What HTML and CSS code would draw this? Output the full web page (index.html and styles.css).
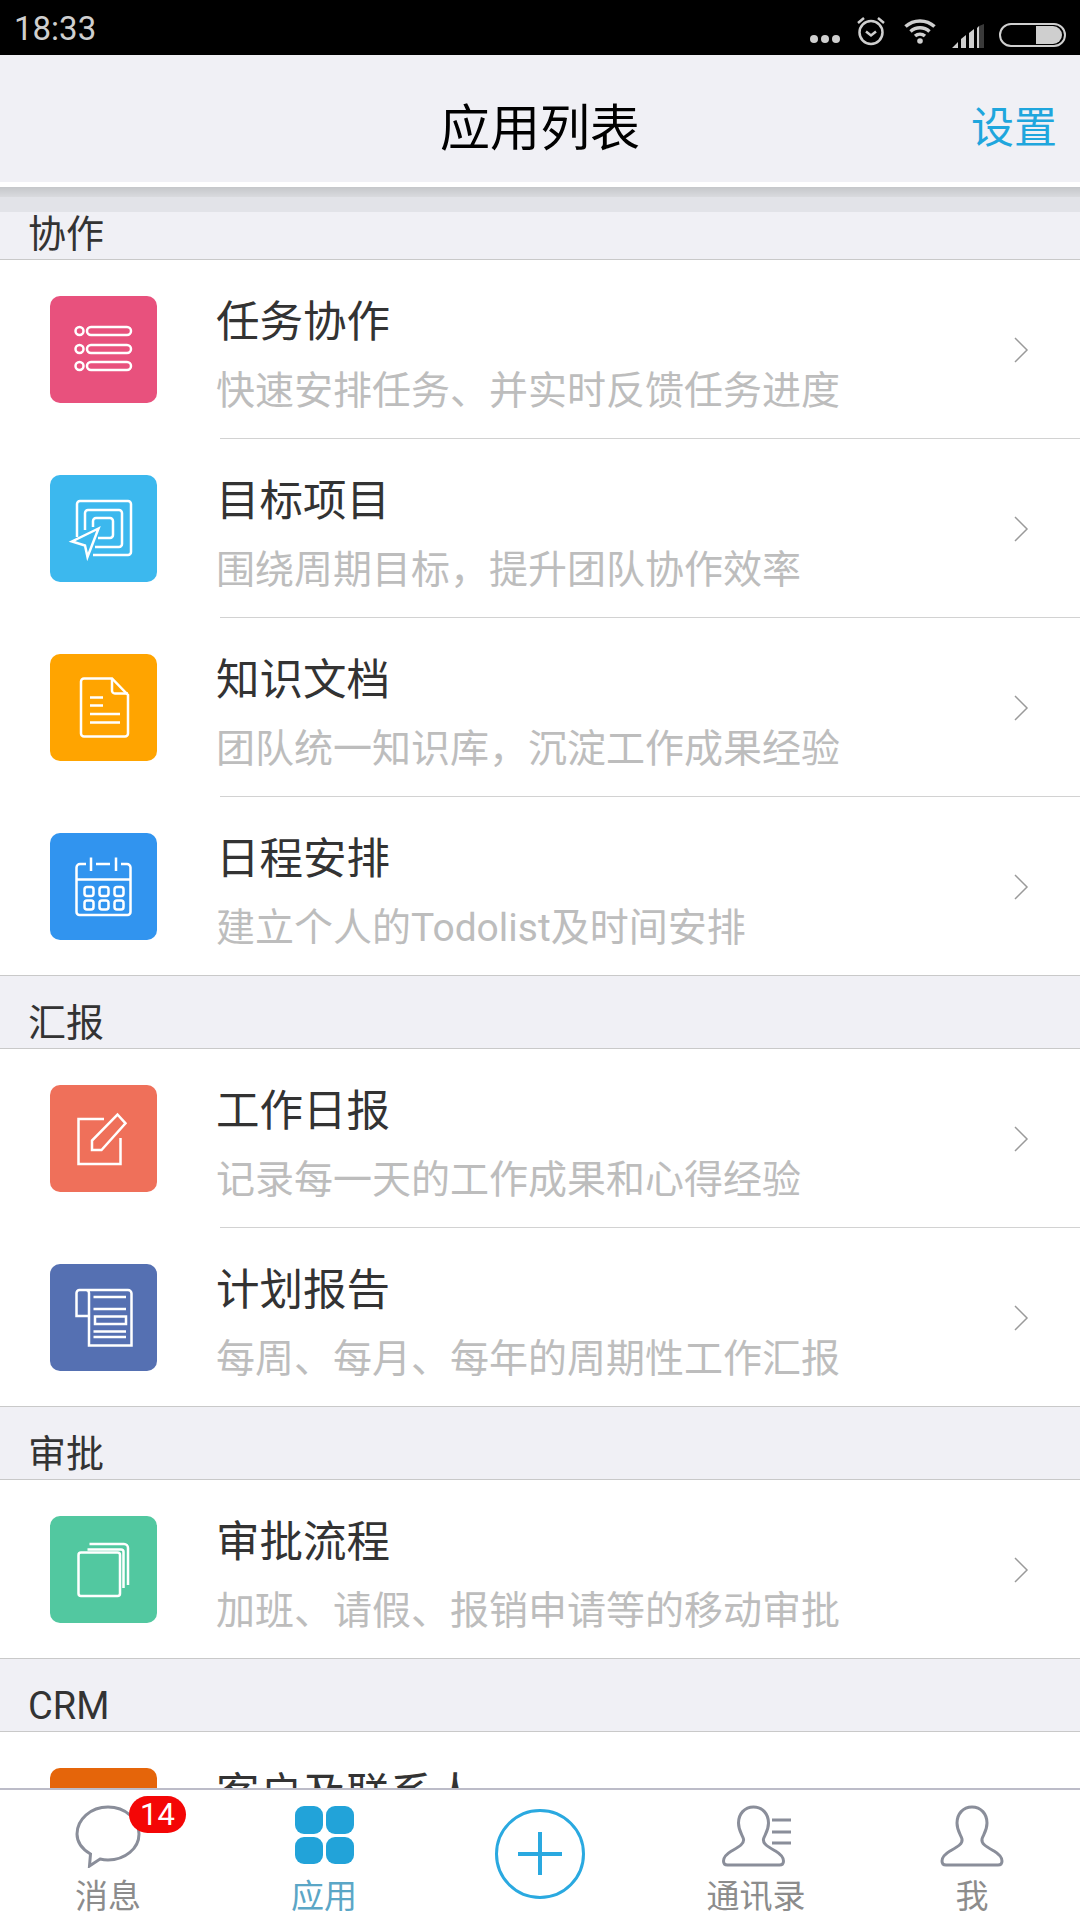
FILE: index.html
```html
<!DOCTYPE html>
<html lang="zh-CN">
<head>
    <meta charset="UTF-8">
    <meta name="viewport" content="width=device-width, initial-scale=1.0">
    <title>应用列表</title>
    <link rel="stylesheet" href="styles.css">
</head>
<body>
    <div class="app">
        <!-- Status bar -->
        <div class="status-bar">
            <span class="status-time">18:33</span>
            <div class="status-icons">
                <svg class="st-dots" width="32" height="10" viewBox="0 0 32 10"><circle cx="5" cy="5" r="4"/><circle cx="16" cy="5" r="4"/><circle cx="27" cy="5" r="4"/></svg>
                <svg class="st-alarm" width="30" height="30" viewBox="0 0 30 30"><circle cx="15" cy="16.500" r="11.500"/><path d="M10 15.500l5 4 5-4M2 7l6-5M28 7l-6-5"/></svg>
                <svg class="st-wifi" width="32" height="26" viewBox="0 0 32 26"><path d="M1.500 8.500C9.500 1 22.500 1 30.500 8.500M6.500 13.500c5.500-5 13.500-5 19 0M11 18c3-2.500 7-2.500 10 0"/><circle cx="16" cy="23" r="2.800"/></svg>
                <svg class="st-signal" width="34" height="24" viewBox="0 0 34 24"><path class="sig-on" d="M0 24l6-6v6zM9 24v-9l5-4v13zM17 24V9l5-4v19zM25 24V4l2-2v22z"/><path class="sig-off" d="M27 2l5-2v24h-5z"/></svg>
                <svg class="st-battery" width="67" height="24" viewBox="0 0 67 24"><rect class="bat-frame" x="1" y="1" width="65" height="22" rx="11"/><path class="bat-fill" d="M37 3h17a9 9 0 0 1 0 18H37z"/></svg>
            </div>
        </div>

        <!-- Title bar -->
        <div class="nav-bar">
            <span></span>
            <span class="nav-title">应用列表</span>
            <span class="nav-action">设置</span>
        </div>

        <!-- App list -->
        <div class="app-list">
            <div class="group-head group-head-first"><span>协作</span></div>
            <div class="group">
                <div class="item">
                    <div class="tile tile-pink">
                        <svg width="107" height="107" viewBox="0 0 107 107">
                            <circle cx="29.500" cy="35" r="4"/><circle cx="29.500" cy="53" r="4"/><circle cx="29.500" cy="70" r="4"/>
                            <rect x="37" y="31" width="44" height="8" rx="4"/><rect x="37" y="49" width="44" height="8" rx="4"/><rect x="37" y="66" width="44" height="8" rx="4"/>
                        </svg>
                    </div>
                    <div class="item-body">
                        <div class="item-text">
                            <div class="item-title">任务协作</div>
                            <div class="item-desc">快速安排任务、并实时反馈任务进度</div>
                        </div>
                        <svg class="chevron" width="16" height="26" viewBox="0 0 16 26"><path d="M2 1l12 12L2 25"/></svg>
                    </div>
                </div>
                <div class="item">
                    <div class="tile tile-sky">
                        <svg width="107" height="107" viewBox="0 0 107 107">
                            <path d="M27 62V29a3 3 0 0 1 3-3h48a3 3 0 0 1 3 3v48a3 3 0 0 1-3 3H43"/>
                            <path d="M35 55V38a3 3 0 0 1 3-3h31a3 3 0 0 1 3 3v31a3 3 0 0 1-3 3H45"/>
                            <path d="M43 52V46a3 3 0 0 1 3-3h14a3 3 0 0 1 3 3v14a3 3 0 0 1-3 3H48"/>
                            <path d="M48.500 53.500L22 66.500l13 4 2.500 11.500z"/>
                        </svg>
                    </div>
                    <div class="item-body">
                        <div class="item-text">
                            <div class="item-title">目标项目</div>
                            <div class="item-desc">围绕周期目标，提升团队协作效率</div>
                        </div>
                        <svg class="chevron" width="16" height="26" viewBox="0 0 16 26"><path d="M2 1l12 12L2 25"/></svg>
                    </div>
                </div>
                <div class="item">
                    <div class="tile tile-orange">
                        <svg width="107" height="107" viewBox="0 0 107 107">
                            <path d="M62 24.500H34a3 3 0 0 0-3 3v52a3 3 0 0 0 3 3h41a3 3 0 0 0 3-3V41z"/>
                            <path d="M62 24.500V36a3 3 0 0 0 3 3.500h13"/>
                            <path d="M40 43.500h13M40 51.500h13M40 60h30M40 68.500h30"/>
                        </svg>
                    </div>
                    <div class="item-body">
                        <div class="item-text">
                            <div class="item-title">知识文档</div>
                            <div class="item-desc">团队统一知识库，沉淀工作成果经验</div>
                        </div>
                        <svg class="chevron" width="16" height="26" viewBox="0 0 16 26"><path d="M2 1l12 12L2 25"/></svg>
                    </div>
                </div>
                <div class="item">
                    <div class="tile tile-blue">
                        <svg width="107" height="107" viewBox="0 0 107 107">
                            <path d="M36 31h-6a3.500 3.500 0 0 0-3.500 3.500V79a3 3 0 0 0 3 3h48a3 3 0 0 0 3-3V34.500A3.500 3.500 0 0 0 77 31h-6"/>
                            <path d="M27 46.500h54M41 24.500V38M66 24.500V38M46 31h14"/>
                            <rect x="34.500" y="54" width="9" height="9" rx="2.500"/><rect x="49.500" y="54" width="9" height="9" rx="2.500"/><rect x="64.500" y="54" width="9" height="9" rx="2.500"/>
                            <rect x="34.500" y="67.500" width="9" height="9" rx="2.500"/><rect x="49.500" y="67.500" width="9" height="9" rx="2.500"/><rect x="64.500" y="67.500" width="9" height="9" rx="2.500"/>
                        </svg>
                    </div>
                    <div class="item-body">
                        <div class="item-text">
                            <div class="item-title">日程安排</div>
                            <div class="item-desc">建立个人的Todolist及时间安排</div>
                        </div>
                        <svg class="chevron" width="16" height="26" viewBox="0 0 16 26"><path d="M2 1l12 12L2 25"/></svg>
                    </div>
                </div>
            </div>

            <div class="group-head"><span>汇报</span></div>
            <div class="group">
                <div class="item">
                    <div class="tile tile-coral">
                        <svg width="107" height="107" viewBox="0 0 107 107">
                            <path d="M54 34H28.500v45h42V53"/>
                            <path d="M67.500 29.500l8 8.800L51.500 65H42V55.500z"/>
                        </svg>
                    </div>
                    <div class="item-body">
                        <div class="item-text">
                            <div class="item-title">工作日报</div>
                            <div class="item-desc">记录每一天的工作成果和心得经验</div>
                        </div>
                        <svg class="chevron" width="16" height="26" viewBox="0 0 16 26"><path d="M2 1l12 12L2 25"/></svg>
                    </div>
                </div>
                <div class="item">
                    <div class="tile tile-indigo">
                        <svg width="107" height="107" viewBox="0 0 107 107">
                            <path d="M39 52H26.500V29a3 3 0 0 1 3-3H78a3.500 3.500 0 0 1 3.500 3.500V81.500H39V29a3 3 0 0 0-3-3"/>
                            <path d="M43.500 33h32.500M43.500 45h32.500M43.500 67.500h32.500M43.500 73h32.500"/>
                            <rect x="45" y="52.500" width="31" height="7.500"/>
                        </svg>
                    </div>
                    <div class="item-body">
                        <div class="item-text">
                            <div class="item-title">计划报告</div>
                            <div class="item-desc">每周、每月、每年的周期性工作汇报</div>
                        </div>
                        <svg class="chevron" width="16" height="26" viewBox="0 0 16 26"><path d="M2 1l12 12L2 25"/></svg>
                    </div>
                </div>
            </div>

            <div class="group-head"><span>审批</span></div>
            <div class="group">
                <div class="item">
                    <div class="tile tile-green">
                        <svg width="107" height="107" viewBox="0 0 107 107">
                            <rect x="28.500" y="36.500" width="41.500" height="43.500" rx="2.500"/>
                            <path d="M37.500 33.500H71a2.500 2.500 0 0 1 2.500 2.500V72"/>
                            <path d="M39.500 28H74a4 4 0 0 1 4 4V69"/>
                        </svg>
                    </div>
                    <div class="item-body">
                        <div class="item-text">
                            <div class="item-title">审批流程</div>
                            <div class="item-desc">加班、请假、报销申请等的移动审批</div>
                        </div>
                        <svg class="chevron" width="16" height="26" viewBox="0 0 16 26"><path d="M2 1l12 12L2 25"/></svg>
                    </div>
                </div>
            </div>

            <div class="group-head"><span>CRM</span></div>
            <div class="group">
                <div class="item">
                    <div class="tile tile-rust"></div>
                    <div class="item-body">
                        <div class="item-text">
                            <div class="item-title">客户及联系人</div>
                        </div>
                    </div>
                </div>
            </div>
        </div>

        <!-- Bottom tabs -->
        <div class="tab-bar">
            <div class="tab">
                <svg class="tab-icon" width="70" height="64" viewBox="0 0 70 64"><path d="M17.500 50C9 45 4 38 4 30 4 15.500 17.500 3 35 3s31 12.500 31 27-14 26-31 26c-3 0-6-.5-8-1l-10.500 7z"/></svg>
                <span class="tab-badge">14</span>
                <span class="tab-label">消息</span>
            </div>
            <div class="tab tab-active">
                <svg class="tab-icon" width="70" height="64" viewBox="0 0 70 64">
                    <rect x="6" y="2" width="28" height="28" rx="9"/><rect x="37" y="2" width="28" height="28" rx="9"/>
                    <rect x="6" y="33" width="28" height="27" rx="9"/><rect x="37" y="33" width="28" height="27" rx="9"/>
                </svg>
                <span class="tab-label">应用</span>
            </div>
            <div class="tab tab-add">
                <svg width="92" height="92" viewBox="0 0 92 92"><circle cx="46" cy="46" r="43.500"/><path d="M24 46h44M46 24v43"/></svg>
            </div>
            <div class="tab">
                <svg class="tab-icon" width="70" height="64" viewBox="0 0 70 64">
                    <path d="M32.500 3c-9 0-15 7-15 16 0 8 4 12 5 16 1 5-5 8-12 12-5 3-8 6-8 10 0 3 2 4 4 4h52c2 0 4-1 4-4 0-4-3-7-8-10-7-4-13-7-12-12 1-4 5-8 5-16 0-9-6-16-15-16z"/>
                    <path d="M51 16h19M51 28h19M51 39h19"/>
                </svg>
                <span class="tab-label">通讯录</span>
            </div>
            <div class="tab">
                <svg class="tab-icon" width="70" height="64" viewBox="0 0 70 64"><path d="M35 3c-9 0-15 7-15 16 0 8 4 12 5 16 1 5-5 8-12 12-5 3-8 6-8 10 0 3 2 4 4 4h52c2 0 4-1 4-4 0-4-3-7-8-10-7-4-13-7-12-12 1-4 5-8 5-16 0-9-6-16-15-16z"/></svg>
                <span class="tab-label">我</span>
            </div>
        </div>
    </div>
</body>
</html>
```

FILE: styles.css
```css
* {
    margin: 0;
    padding: 0;
    box-sizing: border-box;
}

body {
    font-family: Roboto, "Noto Sans CJK SC", sans-serif;
    background-color: #ffffff;
}

.app {
    width: 1080px;
    height: 1920px;
    display: flex;
    flex-direction: column;
    overflow: hidden;
}

/* === STATUS BAR === */
.status-bar {
    height: 55px;
    flex: none;
    background: #000000;
    display: flex;
    justify-content: space-between;
    align-items: center;
    padding: 2px 14px 0 14px;
}

.status-time {
    font-size: 33px;
    color: #cfcfcf;
}

.status-icons {
    display: flex;
    align-items: flex-start;
    margin-top: -2px;
}

.status-icons svg {
    display: block;
}

.st-dots {
    margin-top: 26px;
    fill: #cfcfcf;
}

.st-alarm {
    margin: 8px 0 0 15px;
    fill: none;
    stroke: #cfcfcf;
    stroke-width: 2.5;
}

.st-wifi {
    margin: 10px 0 0 18px;
    fill: none;
    stroke: #cfcfcf;
    stroke-width: 3.5;
}

.st-wifi circle {
    fill: #cfcfcf;
    stroke: none;
}

.st-signal {
    margin: 16px 0 0 16px;
}

.sig-on {
    fill: #cfcfcf;
}

.sig-off {
    fill: #3a3a3a;
}

.st-battery {
    margin: 15px 0 0 13px;
}

.bat-frame {
    fill: none;
    stroke: #cfcfcf;
    stroke-width: 2;
}

.bat-fill {
    fill: #cfcfcf;
}

/* === TITLE BAR === */
.nav-bar {
    height: 132px;
    flex: none;
    background: #f0f0f5;
    border-bottom: 5px solid #ffffff;
    display: grid;
    grid-template-columns: 1fr auto 1fr;
    align-items: center;
    padding-top: 11px;
}

.nav-title {
    font-size: 50px;
    color: #000000;
}

.nav-action {
    font-size: 43px;
    color: #1fa6dd;
    justify-self: end;
    margin-right: 23px;
}

/* === LIST === */
.app-list {
    flex: 1;
    min-height: 0;
    overflow: hidden;
    background: #f0f0f5;
}

.group-head {
    height: 73px;
    display: flex;
    align-items: flex-end;
    padding-left: 28px;
    border-bottom: 1px solid #c9c9c9;
    font-size: 38px;
    line-height: 49px;
    color: #333333;
}

.group-head-first {
    background: linear-gradient(#c5c7ca 0, #d9dade 10px, #e2e3e8 10px, #e2e3e8 25px, #f0f0f5 25px);
}

.group {
    background: #ffffff;
}

.item {
    height: 179px;
    display: flex;
    background: #ffffff;
}

.item:last-child {
    border-bottom: 1px solid #c9c9c9;
}

.tile {
    width: 107px;
    height: 107px;
    flex: none;
    margin: 36px 0 0 50px;
    border-radius: 10px;
}

.tile svg {
    display: block;
    fill: none;
    stroke: #ffffff;
    stroke-width: 2.5;
}

.tile-pink { background: #e8517d; }
.tile-sky { background: #3cb8ee; }
.tile-orange { background: #ffa400; }
.tile-blue { background: #3194ef; }
.tile-coral { background: #ef705a; }
.tile-indigo { background: #5570b2; }
.tile-green { background: #52c8a0; }
.tile-rust { background: #e5650a; }

.item-body {
    flex: 1;
    margin-left: 63px;
    display: flex;
    justify-content: space-between;
    border-bottom: 1px solid #d2d2d2;
}

.item:last-child .item-body {
    border-bottom: none;
}

.item-text {
    margin-left: -4px;
    padding-top: 34px;
}

.item-title {
    font-size: 43.5px;
    line-height: 58px;
    color: #333333;
}

.item-desc {
    margin-top: 15px;
    font-size: 39px;
    line-height: 48px;
    color: #bdbdbd;
}

.chevron {
    flex: none;
    margin: 77px 51px 0 0;
    fill: none;
    stroke: #9a9a9a;
    stroke-width: 1.500;
}

/* === BOTTOM TABS === */
.tab-bar {
    height: 132px;
    flex: none;
    background: #ffffff;
    border-top: 2px solid #bcbcc8;
    display: flex;
}

.tab {
    flex: 1;
    position: relative;
    display: flex;
    flex-direction: column;
    align-items: center;
    padding-top: 14px;
}

.tab-icon {
    display: block;
    fill: none;
    stroke: #8a8e9a;
    stroke-width: 3;
}

.tab-label {
    margin-top: 9px;
    font-size: 33px;
    line-height: 40px;
    color: #8c8c8c;
}

.tab-active .tab-icon {
    fill: #22a3d9;
    stroke: none;
}

.tab-active .tab-label {
    color: #5ba6c6;
}

.tab-add svg {
    display: block;
    margin-top: 4px;
    fill: none;
    stroke: #2aa9e0;
    stroke-width: 3;
}

.tab-add path {
    stroke-width: 4;
}

.tab-badge {
    position: absolute;
    top: 6px;
    left: 129px;
    width: 57px;
    height: 37px;
    border-radius: 19px;
    background: #f40606;
    color: #ffffff;
    font-size: 31px;
    line-height: 37px;
    text-align: center;
}
```
